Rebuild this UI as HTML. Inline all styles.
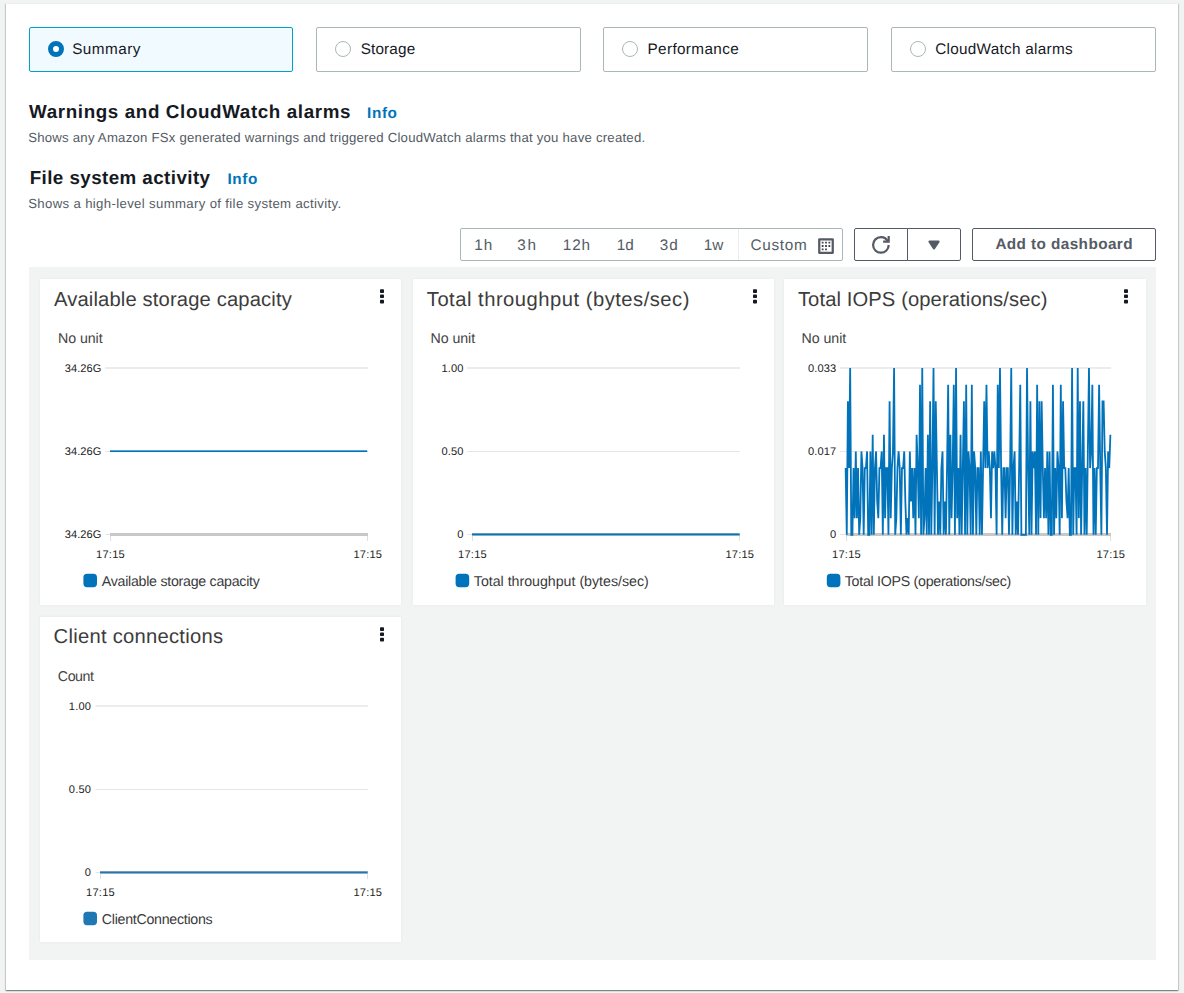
<!DOCTYPE html>
<html lang="en">
<head>
<meta charset="utf-8">
<title>File system monitoring</title>
<style>
*{box-sizing:border-box;margin:0;padding:0}
html,body{width:1184px;height:993px;overflow:hidden}
body{background:#f2f3f3;font-family:"Liberation Sans","DejaVu Sans",sans-serif;color:#16191f;font-size:14px;position:relative;text-rendering:geometricPrecision}
.t{position:absolute;white-space:nowrap;line-height:1;display:block}
#container{position:absolute;left:6px;top:3px;width:1172px;height:987px;background:#fff;
  box-shadow:0 1px 1px 0 rgba(0,28,36,.3),1px 1px 1px 0 rgba(0,28,36,.15),-1px 1px 1px 0 rgba(0,28,36,.15);border-top:1px solid #eaeded}
.tile{position:absolute;top:27px;height:45px;width:264.25px;border:1px solid #aab7b8;border-radius:2px;background:#fff}
.tile.sel{border-color:#00a1c9;background:#f1faff}
.radio{position:absolute;top:41px;width:16px;height:16px;border-radius:50%;border:1px solid #aab7b8;background:#fff}
.radio.on{border:5px solid #0073bb}
#range{position:absolute;left:460px;top:228px;width:383px;height:33px;border:1px solid #aab7b8;border-radius:2px;background:#fff}
#range .sep{position:absolute;left:276.5px;top:0;width:1px;height:31px;background:#eaeded}
.btn{position:absolute;top:228px;height:33px;border:1px solid #545b64;border-radius:2px;background:#fff}
#dash{position:absolute;left:29px;top:267px;width:1127px;height:693px;background:#f2f3f3}
.card{position:absolute;background:#fff;box-shadow:0 0 3px rgba(0,0,0,.05)}
.card svg{position:absolute;left:0;top:0;overflow:visible}
svg text{font-family:"Liberation Sans","DejaVu Sans",sans-serif;text-rendering:geometricPrecision}
</style>
</head>
<body>
<div id="container"></div>

<div class="tile sel" style="left:29px;width:264px"></div>
<div class="tile" style="left:316px;width:265px"></div>
<div class="tile" style="left:603px;width:265px"></div>
<div class="tile" style="left:891px;width:265px"></div>
<div class="radio on" style="left:47.5px"></div>
<div class="radio" style="left:334.75px"></div>
<div class="radio" style="left:621.85px"></div>
<div class="radio" style="left:909.7px"></div>
<span class="t" style="left:72.20px;top:42.10px;font-size:15.3px;font-weight:400;color:#16191f;letter-spacing:0.450px">Summary</span>
<span class="t" style="left:360.70px;top:42.10px;font-size:15.3px;font-weight:400;color:#16191f;letter-spacing:0.150px">Storage</span>
<span class="t" style="left:647.50px;top:42.10px;font-size:15.3px;font-weight:400;color:#16191f;letter-spacing:0.360px">Performance</span>
<span class="t" style="left:935.20px;top:42.10px;font-size:15.3px;font-weight:400;color:#16191f;letter-spacing:0.281px">CloudWatch alarms</span>

<h2 class="t" style="left:29.10px;top:102.51px;font-size:18.8px;font-weight:700;color:#16191f;letter-spacing:0.621px">Warnings and CloudWatch alarms</h2>
<a class="t" style="left:367.10px;top:105.82px;font-size:15.3px;font-weight:700;color:#0073bb;letter-spacing:0.600px">Info</a>
<p class="t" style="left:28.20px;top:130.81px;font-size:13.2px;font-weight:400;color:#545b64;letter-spacing:0.223px">Shows any Amazon FSx generated warnings and triggered CloudWatch alarms that you have created.</p>

<h2 class="t" style="left:29.70px;top:168.51px;font-size:18.8px;font-weight:700;color:#16191f;letter-spacing:0.426px">File system activity</h2>
<a class="t" style="left:227.50px;top:171.71px;font-size:15.3px;font-weight:700;color:#0073bb;letter-spacing:0.600px">Info</a>
<p class="t" style="left:28.20px;top:196.70px;font-size:13.2px;font-weight:400;color:#545b64;letter-spacing:0.342px">Shows a high-level summary of file system activity.</p>

<div id="range"><div class="sep"></div>
  <svg style="position:absolute;left:356px;top:7.85px" width="18" height="18" viewBox="0 0 16 16" fill="none" stroke="#545b64" stroke-width="2" stroke-linejoin="round"><path d="M2 2h12v12H2z"/><path stroke-width="1.6" stroke-linecap="square" stroke="#414750" d="M5 5h.01M8 5h.01M11 5h.01M5 8h.01M8 8h.01M11 8h.01M5 11h.01M8 11h.01"/></svg>
</div>
<span class="t" style="left:474.30px;top:237.51px;font-size:15.3px;font-weight:400;color:#545b64;letter-spacing:0.900px">1h</span>
<span class="t" style="left:517.30px;top:237.51px;font-size:15.3px;font-weight:400;color:#545b64;letter-spacing:1.800px">3h</span>
<span class="t" style="left:562.80px;top:237.51px;font-size:15.3px;font-weight:400;color:#545b64;letter-spacing:0.900px">12h</span>
<span class="t" style="left:616.70px;top:237.51px;font-size:15.3px;font-weight:400;color:#545b64;letter-spacing:0.000px">1d</span>
<span class="t" style="left:659.80px;top:237.51px;font-size:15.3px;font-weight:400;color:#545b64;letter-spacing:0.900px">3d</span>
<span class="t" style="left:703.70px;top:237.51px;font-size:15.3px;font-weight:400;color:#545b64;letter-spacing:0.000px">1w</span>
<span class="t" style="left:750.40px;top:237.51px;font-size:15.3px;font-weight:400;color:#545b64;letter-spacing:0.720px">Custom</span>

<div class="btn" style="left:854px;width:54px;border-radius:2px 0 0 2px">
  <svg style="position:absolute;left:17.2px;top:7.05px" width="17.8" height="17.8" viewBox="0 0 16 16" fill="none" stroke="#545b64" stroke-width="2"><path d="M10 5h5V0"/><path d="M15 8a6.957 6.957 0 0 1-7 7 6.957 6.957 0 0 1-7-7 6.957 6.957 0 0 1 7-7 6.87 6.87 0 0 1 6.3 4"/></svg>
</div>
<div class="btn" style="left:907px;width:54px;border-radius:0 2px 2px 0">
  <svg style="position:absolute;left:16.9px;top:6.8px" width="18" height="18" viewBox="0 0 16 16"><path d="M4 5h8l-4 6-4-6z" fill="#545b64" stroke="#545b64" stroke-width="2" stroke-linejoin="round"/></svg>
</div>
<div class="btn" style="left:972px;width:184px"></div>
<span class="t" style="left:995.40px;top:236.71px;font-size:15.3px;font-weight:700;color:#545b64;letter-spacing:0.420px">Add to dashboard</span>

<div id="dash">
  <div class="card" style="left:11px;top:12px;width:361px;height:326px"><svg width="361" height="326" viewBox="0 0 361 326">
<rect x="340.0" y="10.3" width="4" height="3.7" rx="0.8" fill="#16191f"/>
<rect x="340.0" y="15.4" width="4" height="3.7" rx="0.8" fill="#16191f"/>
<rect x="340.0" y="20.8" width="4" height="3.7" rx="0.8" fill="#16191f"/>
<text x="18.0" y="64.0" font-size="14.2" textLength="44.6" lengthAdjust="spacing" fill="#444">No unit</text>
<rect x="65.3" y="88.0" width="262.7" height="2" fill="#ececec"/>
<rect x="65.3" y="172.0" width="262.7" height="1" fill="#e6e6e6"/>
<rect x="65.3" y="255.0" width="4.7" height="1" fill="#e4e4e4"/>
<rect x="70.0" y="254.0" width="258.0" height="3" fill="#c8c8c8"/>
<rect x="70.0" y="257.0" width="1" height="5" fill="#e0e0e0"/>
<rect x="327.0" y="257.0" width="1" height="5" fill="#e0e0e0"/>
<text x="61.4" y="92.9" font-size="11.1" text-anchor="end" textLength="36.6" lengthAdjust="spacing" fill="#222">34.26G</text>
<text x="61.4" y="175.9" font-size="11.1" text-anchor="end" textLength="36.6" lengthAdjust="spacing" fill="#222">34.26G</text>
<text x="61.4" y="259.4" font-size="11.1" text-anchor="end" textLength="36.6" lengthAdjust="spacing" fill="#222">34.26G</text>
<text x="70.4" y="279.0" font-size="11.1" text-anchor="middle" textLength="28.6" lengthAdjust="spacing" fill="#222">17:15</text>
<text x="327.7" y="279.0" font-size="11.1" text-anchor="middle" textLength="28.6" lengthAdjust="spacing" fill="#222">17:15</text>
<rect x="70.0" y="171.35" width="257.2" height="1.7" fill="#0073bb"/>
<rect x="43.4" y="294.8" width="13.6" height="13.4" rx="3.6" fill="#0073bb"/>
<text x="61.8" y="306.8" font-size="14.2" textLength="158.0" lengthAdjust="spacing" fill="#3a3a3a">Available storage capacity</text>
</svg></div>
  <div class="card" style="left:384px;top:12px;width:361px;height:326px"><svg width="361" height="326" viewBox="0 0 361 326">
<rect x="340.0" y="10.3" width="4" height="3.7" rx="0.8" fill="#16191f"/>
<rect x="340.0" y="15.4" width="4" height="3.7" rx="0.8" fill="#16191f"/>
<rect x="340.0" y="20.8" width="4" height="3.7" rx="0.8" fill="#16191f"/>
<text x="17.5" y="64.0" font-size="14.2" textLength="44.6" lengthAdjust="spacing" fill="#444">No unit</text>
<rect x="54.0" y="88.0" width="273.0" height="2" fill="#ececec"/>
<rect x="54.0" y="172.0" width="273.0" height="1" fill="#e6e6e6"/>
<rect x="54.0" y="255.0" width="5.0" height="1" fill="#e4e4e4"/>
<rect x="59.0" y="254.0" width="268.0" height="3" fill="#c8c8c8"/>
<rect x="59.0" y="257.0" width="1" height="5" fill="#e0e0e0"/>
<rect x="326.0" y="257.0" width="1" height="5" fill="#e0e0e0"/>
<text x="50.3" y="92.9" font-size="11.1" text-anchor="end" textLength="21.8" lengthAdjust="spacing" fill="#222">1.00</text>
<text x="50.3" y="175.9" font-size="11.1" text-anchor="end" textLength="21.8" lengthAdjust="spacing" fill="#222">0.50</text>
<text x="50.3" y="259.4" font-size="11.1" text-anchor="end" fill="#222">0</text>
<text x="59.4" y="279.0" font-size="11.1" text-anchor="middle" textLength="28.6" lengthAdjust="spacing" fill="#222">17:15</text>
<text x="326.7" y="279.0" font-size="11.1" text-anchor="middle" textLength="28.6" lengthAdjust="spacing" fill="#222">17:15</text>
<rect x="59.0" y="254.50" width="267.6" height="1.8" fill="#0073bb"/>
<rect x="42.6" y="294.8" width="13.6" height="13.4" rx="3.6" fill="#0073bb"/>
<text x="60.8" y="306.8" font-size="14.2" textLength="174.9" lengthAdjust="spacing" fill="#3a3a3a">Total throughput (bytes/sec)</text>
</svg></div>
  <div class="card" style="left:755px;top:12px;width:362px;height:326px"><svg width="362" height="326" viewBox="0 0 362 326">
<rect x="340.0" y="10.3" width="4" height="3.7" rx="0.8" fill="#16191f"/>
<rect x="340.0" y="15.4" width="4" height="3.7" rx="0.8" fill="#16191f"/>
<rect x="340.0" y="20.8" width="4" height="3.7" rx="0.8" fill="#16191f"/>
<text x="17.6" y="64.0" font-size="14.2" textLength="44.6" lengthAdjust="spacing" fill="#444">No unit</text>
<rect x="56.0" y="88.0" width="271.0" height="2" fill="#ececec"/>
<rect x="56.0" y="172.0" width="271.0" height="1" fill="#e6e6e6"/>
<rect x="56.0" y="255.0" width="6.0" height="1" fill="#e4e4e4"/>
<rect x="62.0" y="254.0" width="265.0" height="3" fill="#c8c8c8"/>
<rect x="62.0" y="257.0" width="1" height="5" fill="#e0e0e0"/>
<rect x="326.0" y="257.0" width="1" height="5" fill="#e0e0e0"/>
<text x="52.2" y="92.9" font-size="11.1" text-anchor="end" textLength="28.2" lengthAdjust="spacing" fill="#222">0.033</text>
<text x="52.2" y="175.9" font-size="11.1" text-anchor="end" textLength="28.2" lengthAdjust="spacing" fill="#222">0.017</text>
<text x="52.2" y="259.4" font-size="11.1" text-anchor="end" fill="#222">0</text>
<text x="62.4" y="279.0" font-size="11.1" text-anchor="middle" textLength="28.6" lengthAdjust="spacing" fill="#222">17:15</text>
<text x="326.7" y="279.0" font-size="11.1" text-anchor="middle" textLength="28.6" lengthAdjust="spacing" fill="#222">17:15</text>
<polyline fill="none" stroke="#0073bb" stroke-width="1.8" points="61.65,189.08 62.78,255.80 63.90,122.36 65.03,189.08 66.16,89.00 67.28,255.80 68.41,255.80 69.54,189.08 70.66,239.12 71.79,172.40 72.91,239.12 74.04,189.08 75.17,255.80 76.29,239.12 77.42,172.40 78.55,189.08 79.67,255.80 80.80,189.08 81.93,189.08 83.05,172.40 84.18,255.80 85.31,255.80 86.43,172.40 87.56,255.80 88.69,155.72 89.81,255.80 90.94,189.08 92.07,172.40 93.19,222.44 94.32,239.12 95.44,189.08 96.57,189.08 97.70,172.40 98.82,255.80 99.95,155.72 101.08,239.12 102.20,189.08 103.33,189.08 104.46,255.80 105.58,122.36 106.71,239.12 107.84,189.08 108.96,172.40 110.09,89.00 111.22,255.80 112.34,239.12 113.47,189.08 114.60,172.40 115.72,189.08 116.85,255.80 117.98,189.08 119.10,189.08 120.23,172.40 121.35,222.44 122.48,255.80 123.61,239.12 124.73,255.80 125.86,172.40 126.99,222.44 128.11,189.08 129.24,239.12 130.37,189.08 131.49,255.80 132.62,155.72 133.75,189.08 134.87,239.12 136.00,105.68 137.13,255.80 138.25,89.00 139.38,255.80 140.50,239.12 141.63,189.08 142.76,255.80 143.88,155.72 145.01,255.80 146.14,122.36 147.26,255.80 148.39,189.08 149.52,89.00 150.64,255.80 151.77,122.36 152.90,189.08 154.02,255.80 155.15,222.44 156.28,255.80 157.40,189.08 158.53,172.40 159.66,255.80 160.78,222.44 161.91,255.80 163.03,189.08 164.16,105.68 165.29,255.80 166.41,155.72 167.54,239.12 168.67,189.08 169.79,105.68 170.92,255.80 172.05,89.00 173.17,239.12 174.30,189.08 175.43,255.80 176.55,155.72 177.68,255.80 178.81,189.08 179.93,122.36 181.06,255.80 182.19,105.68 183.31,255.80 184.44,172.40 185.56,189.08 186.69,255.80 187.82,105.68 188.94,255.80 190.07,172.40 191.20,189.08 192.32,255.80 193.45,189.08 194.58,189.08 195.70,255.80 196.83,172.40 197.96,255.80 199.08,189.08 200.21,122.36 201.34,189.08 202.46,105.68 203.59,189.08 204.72,172.40 205.84,189.08 206.97,239.12 208.10,172.40 209.22,189.08 210.35,172.40 211.47,189.08 212.60,255.80 213.73,105.68 214.85,189.08 215.98,89.00 217.11,189.08 218.23,255.80 219.36,189.08 220.49,189.08 221.61,239.12 222.74,189.08 223.87,189.08 224.99,255.80 226.12,189.08 227.25,89.00 228.37,255.80 229.50,189.08 230.62,172.40 231.75,255.80 232.88,222.44 234.00,255.80 235.13,189.08 236.26,105.68 237.38,255.80 238.51,255.80 239.64,255.80 240.76,255.80 241.89,255.80 243.02,89.00 244.14,189.08 245.27,255.80 246.40,122.36 247.52,255.80 248.65,172.40 249.78,189.08 250.90,172.40 252.03,255.80 253.15,105.68 254.28,255.80 255.41,122.36 256.53,239.12 257.66,122.36 258.79,189.08 259.91,239.12 261.04,189.08 262.17,239.12 263.29,172.40 264.42,255.80 265.55,172.40 266.67,255.80 267.80,255.80 268.93,105.68 270.05,255.80 271.18,189.08 272.31,239.12 273.43,172.40 274.56,189.08 275.68,255.80 276.81,105.68 277.94,239.12 279.06,122.36 280.19,189.08 281.32,189.08 282.44,222.44 283.57,239.12 284.70,189.08 285.82,255.80 286.95,255.80 288.08,89.00 289.20,255.80 290.33,189.08 291.46,189.08 292.58,255.80 293.71,89.00 294.84,239.12 295.96,122.36 297.09,255.80 298.21,189.08 299.34,122.36 300.47,255.80 301.59,189.08 302.72,255.80 303.85,172.40 304.97,89.00 306.10,189.08 307.23,172.40 308.35,105.68 309.48,255.80 310.61,189.08 311.73,255.80 312.86,189.08 313.99,189.08 315.11,105.68 316.24,189.08 317.37,255.80 318.49,122.36 319.62,122.36 320.74,172.40 321.87,189.08 323.00,255.80 324.12,172.40 325.25,189.08 326.38,155.72"/>
<rect x="42.8" y="294.8" width="13.6" height="13.4" rx="3.6" fill="#0073bb"/>
<text x="60.8" y="306.8" font-size="14.2" textLength="166.4" lengthAdjust="spacing" fill="#3a3a3a">Total IOPS (operations/sec)</text>
</svg></div>
  <div class="card" style="left:11px;top:350px;width:361px;height:325px"><svg width="361" height="325" viewBox="0 0 361 325">
<rect x="340.0" y="10.3" width="4" height="3.7" rx="0.8" fill="#16191f"/>
<rect x="340.0" y="15.4" width="4" height="3.7" rx="0.8" fill="#16191f"/>
<rect x="340.0" y="20.8" width="4" height="3.7" rx="0.8" fill="#16191f"/>
<text x="17.8" y="64.0" font-size="14.2" textLength="36.2" lengthAdjust="spacing" fill="#444">Count</text>
<rect x="55.6" y="88.0" width="272.4" height="2" fill="#ececec"/>
<rect x="55.6" y="172.0" width="272.4" height="1" fill="#e6e6e6"/>
<rect x="55.6" y="255.0" width="4.4" height="1" fill="#e4e4e4"/>
<rect x="60.0" y="254.0" width="268.0" height="3" fill="#c8c8c8"/>
<rect x="60.0" y="257.0" width="1" height="5" fill="#e0e0e0"/>
<rect x="327.0" y="257.0" width="1" height="5" fill="#e0e0e0"/>
<text x="51.0" y="92.9" font-size="11.1" text-anchor="end" textLength="22.2" lengthAdjust="spacing" fill="#222">1.00</text>
<text x="51.0" y="175.9" font-size="11.1" text-anchor="end" textLength="22.2" lengthAdjust="spacing" fill="#222">0.50</text>
<text x="51.0" y="259.4" font-size="11.1" text-anchor="end" fill="#222">0</text>
<text x="60.4" y="279.0" font-size="11.1" text-anchor="middle" textLength="28.6" lengthAdjust="spacing" fill="#222">17:15</text>
<text x="327.7" y="279.0" font-size="11.1" text-anchor="middle" textLength="28.6" lengthAdjust="spacing" fill="#222">17:15</text>
<rect x="60.0" y="254.50" width="267.6" height="1.8" fill="#1f77b4"/>
<rect x="43.4" y="294.8" width="13.6" height="13.4" rx="3.6" fill="#1f77b4"/>
<text x="61.8" y="306.8" font-size="14.2" textLength="110.8" lengthAdjust="spacing" fill="#3a3a3a">ClientConnections</text>
</svg></div>
</div>
<span class="t" style="left:54.00px;top:290.01px;font-size:20.2px;font-weight:400;color:#3c3c3c;letter-spacing:0.144px">Available storage capacity</span>
<span class="t" style="left:426.80px;top:290.01px;font-size:20.2px;font-weight:400;color:#3c3c3c;letter-spacing:0.500px">Total throughput (bytes/sec)</span>
<span class="t" style="left:797.90px;top:290.01px;font-size:20.2px;font-weight:400;color:#3c3c3c;letter-spacing:0.104px">Total IOPS (operations/sec)</span>
<span class="t" style="left:53.60px;top:627.01px;font-size:20.2px;font-weight:400;color:#3c3c3c;letter-spacing:0.265px">Client connections</span>
</body>
</html>
